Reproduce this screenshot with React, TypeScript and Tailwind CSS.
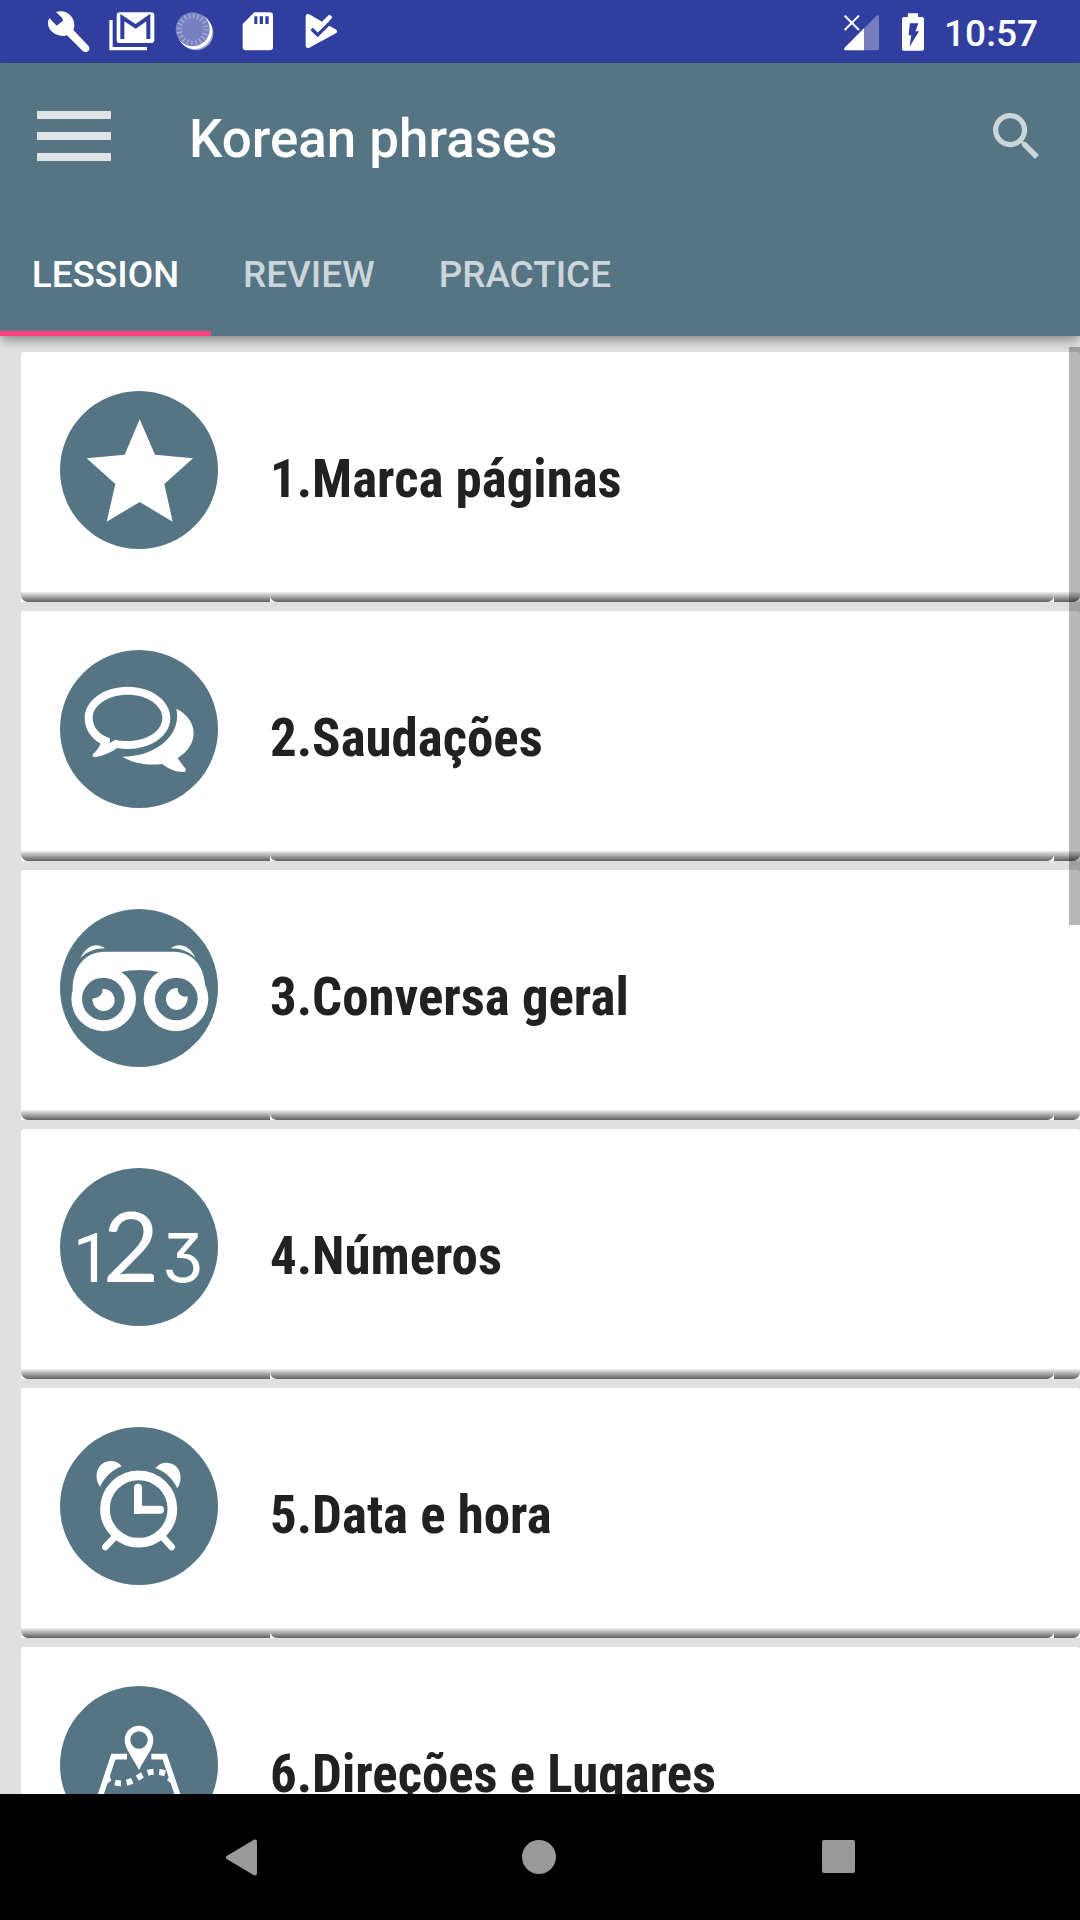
import React from "react";

const lessons = [
    { title: "1.Marca páginas", icon: <StarIcon /> },
    { title: "2.Saudações", icon: <ChatIcon /> },
    { title: "3.Conversa geral", icon: <BinocularsIcon /> },
    { title: "4.Números", icon: <NumbersIcon /> },
    { title: "5.Data e hora", icon: <ClockIcon /> },
    { title: "6.Direções e Lugares", icon: <MapIcon /> },
];

function StarIcon() {
    return (
        <svg viewBox="180 153 474 474" className="h-full w-full" fill="#fff">
            <path d="M419 238L465 344L579 355L493 432L518 545L419 486L320 545L346 432L260 355L374 344Z" />
        </svg>
    );
}

function ChatIcon() {
    return (
        <svg viewBox="60 60 474 474" className="h-full w-full" fill="#fff">
            <path
                fillRule="evenodd"
                d="M263 170C335 170 391 212 391 264C391 316 335 357 263 357C252 357 241 356 231 354C213 367 185 381 161 381C157 380 157 375 160 371C170 362 177 351 182 341C153 325 134 297 134 264C134 212 191 170 263 170ZM263 194C205 194 158 225 158 264C158 291 178 315 210 325L209 340L225 329C237 332 250 333 263 333C321 333 367 303 367 264C367 225 321 194 263 194Z"
            />
            <path d="M409 236C440 251 461 278 461 309C461 339 443 366 413 384C420 395 429 407 437 417C438 423 435 427 430 426C405 426 385 416 367 402C322 408 278 399 247 380C341 381 427 320 409 236Z" />
        </svg>
    );
}

function BinocularsIcon() {
    return (
        <svg viewBox="60 57 474 474" className="h-full w-full" fill="#fff">
            <path d="M121 205C137 168 169 155 195 175C166 175 141 184 121 205Z" />
            <path d="M467 205C451 168 419 155 392 175C422 175 447 184 467 205Z" />
            <path d="M98 300C98 228 137 185 195 185H400C458 185 496 228 496 300L400 330L358 247C320 238 279 238 240 247L190 330Z" />
            <circle cx="191" cy="327" r="97" />
            <circle cx="408" cy="327" r="97" />
            <circle cx="190" cy="327" r="64" fill="#557484" />
            <circle cx="409" cy="327" r="64" fill="#557484" />
            <path d="M187 297C209 294 224 312 224 330C224 349 209 363 190 363C171 363 157 345 157 326C174 324 190 315 187 297Z" />
            <path d="M413 294C391 293 378 310 378 327C378 346 393 360 411 360C430 360 444 342 443 319C430 323 411 314 413 294Z" />
        </svg>
    );
}

function NumbersIcon() {
    return (
        <svg viewBox="60 54 474 474" className="h-full w-full" fill="#fff">
            <text y="395">
                <tspan x="98" fontSize="205" className="font-[Roboto] font-normal">1</tspan>
                <tspan x="188" fontSize="292" className="font-[Lato]">2</tspan>
                <tspan x="366" fontSize="201" className="font-[Inter] font-normal [font-feature-settings:'cv09']">3</tspan>
            </text>
        </svg>
    );
}

function ClockIcon() {
    return (
        <svg viewBox="60 51 474 474" className="h-full w-full" fill="#fff">
            <circle cx="296" cy="297" r="101" fill="none" stroke="#fff" strokeWidth="29" />
            <path d="M180 230C158 198 173 153 213 153C227 153 238 159 245 169C216 180 194 202 180 230Z" />
            <path d="M412 235C433 204 420 158 378 158C364 158 353 165 346 175C375 184 398 206 412 235Z" />
            <path d="M294 233V299H360" fill="none" stroke="#fff" strokeWidth="24" strokeLinecap="round" />
            <path d="M282 290H300V311H282Z" />
            <path d="M222 383L196 411M370 383L395 411" stroke="#fff" strokeWidth="20" strokeLinecap="round" />
        </svg>
    );
}

function MapIcon() {
    return (
        <svg viewBox="180 258 474 474" className="h-full w-full" fill="none" stroke="#fff">
            <path
                fill="#fff"
                stroke="none"
                fillRule="evenodd"
                d="M417 377C442 377 460 396 460 420C460 447 436 472 417 510C398 472 374 447 374 420C374 396 392 377 417 377ZM417 394A26 26 0 1 0 417 446A26 26 0 1 0 417 394Z"
            />
            <path d="M381 470H340L290 620H545L494 470H454" strokeWidth="17" />
            <path d="M327 524L334 541L321 552ZM509 526L501 541L516 551Z" fill="#fff" stroke="none" />
            <path d="M345 548C375 555 397 544 419 530C443 513 472 512 496 520" strokeWidth="18" strokeDasharray="18 17" />
        </svg>
    );
}

const StatusBar = () => {
    return (
        <div className="flex h-[63px] shrink-0 items-center bg-[#303f9f] pl-[37px] text-white">
            <svg viewBox="110 0 189 189" className="h-[63px] w-[63px]" fill="#fff">
                <path d="M167 36C194 26 222 46 222 75C222 81 221 86 219 90L264 137C273 149 261 161 248 154L200 106C173 114 142 94 143 70C143 64 145 59 147 54L169 77L188 62L185 53Z" />
            </svg>
            <svg viewBox="299 0 189 189" className="h-[63px] w-[63px]">
                <path d="M332 60V146H440" fill="none" stroke="#fff" strokeWidth="10" />
                <rect x="349" y="37" width="113" height="92" rx="10" fill="#fff" />
                <path d="M366 117V53L406 79L444 53V117" fill="none" stroke="#303f9f" strokeWidth="12" />
            </svg>
            <svg viewBox="488 0 189 189" className="h-[63px] w-[63px]">
                <circle cx="587" cy="99" r="52" fill="#9da5d3" />
                <circle cx="583" cy="94" r="53" fill="#fff" />
                <circle cx="577" cy="88" r="51" fill="#7780c0" />
                <circle cx="577" cy="88" r="40" fill="none" stroke="#a4abd6" strokeWidth="16" strokeDasharray="4 8.56" />
            </svg>
            <svg viewBox="677 0 189 189" className="h-[63px] w-[63px]">
                <path d="M762 37H808Q818 37 818 47V141Q818 151 808 151H737Q727 151 727 141V72Z" fill="#fff" />
                <path d="M762 49H771V72H762ZM778 49H788V72H778ZM795 49H805V72H795Z" fill="#303f9f" />
            </svg>
            <svg viewBox="866 0 189 189" className="h-[63px] w-[63px]">
                <path d="M916 47Q919 40 927 43L965 65L986 44L996 52L979 73L1008 89Q1013 94 1008 99L927 143Q918 146 916 138Z" fill="#fff" />
                <path d="M934 87L952 105L987 70" fill="none" stroke="#303f9f" strokeWidth="10" />
                <path d="M941 77L953 89L992 48" fill="none" stroke="#fff" strokeWidth="10" />
            </svg>
            <svg viewBox="0 0 105 108" className="mt-[2px] ml-[492px] h-[36px] w-[35px]">
                <path d="M105 4V100Q105 106 99 106H4Q-2 104 2 98L96 4Q103 -3 105 4Z" fill="#757dbe" />
                <path d="M60 40V106H4Q-2 104 2 98Z" fill="#fff" />
                <path d="M2 2L45 45M45 2L2 45" stroke="#fff" strokeWidth="6" />
            </svg>
            <svg viewBox="305 36 67 114" className="ml-[23px] h-[38px] w-[22px]">
                <path d="M323 36H354V47H366Q372 47 372 53V144Q372 150 366 150H311Q305 150 305 144V53Q305 47 311 47H323Z" fill="#fff" />
                <path d="M329 66H355L346 91H357L328 138L333 103H325Z" fill="#303f9f" />
            </svg>
            <span className="mt-[4px] ml-[20px] text-[37.1px] leading-none font-medium">10:57</span>
        </div>
    );
};

const Header = () => {
    return (
        <div className="z-10 flex h-[273px] shrink-0 flex-col bg-[#557484] shadow-[0_5px_10px_-1px_rgba(0,0,0,0.4)]">
            <div className="flex h-[147px] items-center pr-[41px] pl-[37px]">
                <div className="mb-[2px] flex h-[50px] w-[74px] flex-col justify-between">
                    <div className="h-[8px] bg-[#dde3e7]" />
                    <div className="h-[8px] bg-[#dde3e7]" />
                    <div className="h-[8px] bg-[#dde3e7]" />
                </div>
                <h1 className="mt-[5px] ml-[78px] text-[52.9px] leading-none font-medium text-white">Korean phrases</h1>
                <svg viewBox="3 3 17.5 17.5" className="mb-[2px] ml-auto h-[46px] w-[46px]" fill="#ccd5da">
                    <path d="M15.5 14h-.79l-.28-.27C15.41 12.59 16 11.11 16 9.5 16 5.91 13.09 3 9.5 3S3 5.91 3 9.5 5.91 16 9.5 16c1.61 0 3.09-.59 4.23-1.57l.27.28v.79l5 4.99L20.49 19l-4.99-5zm-6 0C7.01 14 5 11.99 5 9.5S7.01 5 9.5 5 14 7.01 14 9.5 11.99 14 9.5 14z" />
                </svg>
            </div>
            <div className="flex h-[126px] text-[36.9px] leading-none font-medium text-[#ccd5da]">
                <div className="flex w-[211px] items-center justify-center border-b-[5px] border-[#ff4081] pt-[10px] text-white">LESSION</div>
                <div className="flex items-center border-b-[5px] border-transparent px-[32px] pt-[10px]">REVIEW</div>
                <div className="flex items-center border-b-[5px] border-transparent px-[32px] pt-[10px]">PRACTICE</div>
            </div>
        </div>
    );
};

const LessonCard = ({ title, icon }: { title: string; icon: React.ReactNode }) => {
    return (
        <div className="flex h-[250px] shrink-0 flex-col rounded-t-[3px] bg-white">
            <div className="flex h-[240px] pl-[39px]">
                <div className="mt-[39px] h-[158px] w-[158px] shrink-0 overflow-hidden rounded-full bg-[#557484]">{icon}</div>
                <div className="mt-[96px] ml-[52px] font-['Roboto_Condensed',Roboto,sans-serif] text-[52.9px] leading-[62px] font-bold font-stretch-[75%] whitespace-nowrap text-[#212121]">
                    {title}
                </div>
            </div>
            {/* Beveled bottom edge, one strip per column */}
            <div className="flex h-[10px]">
                <div className="w-[249px] rounded-bl-[7px] bg-linear-to-b from-[#f2f2f2] to-[#606060]" />
                <div className="w-[784px] rounded-b-[7px] bg-linear-to-b from-[#f2f2f2] to-[#606060]" />
                <div className="flex-1 rounded-br-[7px] bg-linear-to-b from-[#f2f2f2] to-[#606060]" />
            </div>
        </div>
    );
};

const NavBar = () => {
    return (
        <div className="grid h-[126px] shrink-0 grid-cols-3 place-items-center bg-black pr-[92px] pb-px pl-[90px]">
            <svg viewBox="0 0 48 48" className="h-[48px] w-[48px]" fill="#999" stroke="#999" strokeWidth="4" strokeLinejoin="round">
                <path d="M12 24.5L39 8.500V40.500Z" />
            </svg>
            <div className="h-[34px] w-[34px] rounded-full bg-[#999]" />
            <div className="h-[33px] w-[33px] rounded-[2px] bg-[#999]" />
        </div>
    );
};

const App = () => {
    return (
        <div className="flex h-[1920px] w-[1080px] flex-col overflow-hidden bg-[#e0e0e0] font-[Roboto,sans-serif]">
            <StatusBar />
            <Header />
            <div className="relative flex min-h-0 flex-1 flex-col gap-[9px] overflow-hidden pt-[16px] pl-[21px]">
                {lessons.map((lesson) => (
                    <LessonCard key={lesson.title} title={lesson.title} icon={lesson.icon} />
                ))}
                {/* Scrollbar thumb */}
                <div className="absolute top-[11px] right-0 h-[578px] w-[11px] bg-black/28" />
            </div>
            <NavBar />
        </div>
    );
};

export default App;
